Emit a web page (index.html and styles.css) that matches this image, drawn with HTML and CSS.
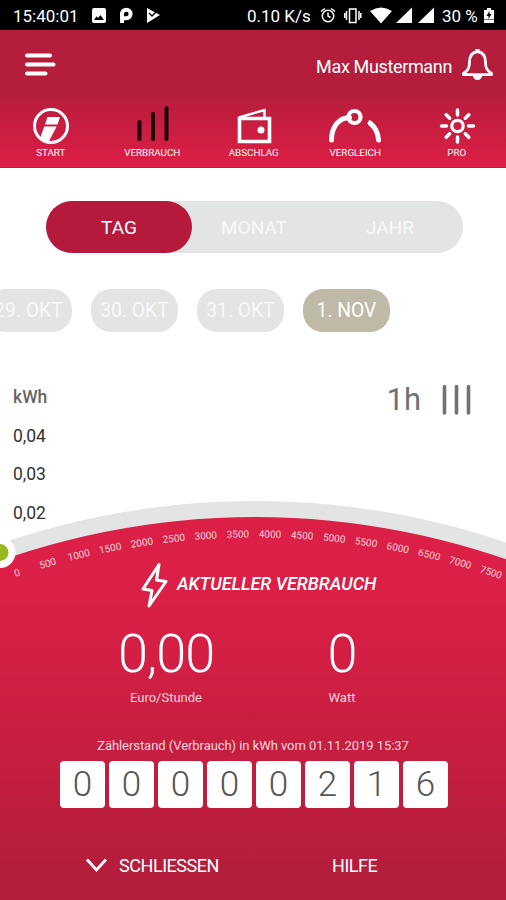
FILE: index.html
```html
<!DOCTYPE html>
<html lang="de">
<head>
  <meta charset="UTF-8">
  <meta name="viewport" content="width=device-width, initial-scale=1.0">
  <title>Verbrauch</title>
  <link rel="stylesheet" href="styles.css">
</head>
<body>
  <div class="app">
    <div class="status">
      <span class="clock">15:40:01</span>
      <svg class="status-left" width="72" height="18" viewBox="90 7 72 18">
        <path fill="#fff" fill-rule="evenodd" d="M94 8h10q2 0 2 2v11q0 2-2 2H94q-2 0-2-2V10q0-2 2-2zM94 20h10l-3.500-5-2.500 3-1.500-1.800z"/>
        <path fill="none" stroke="#fff" stroke-width="3.900" d="M122 23v-9a4.300 4.300 0 1 1 4.300 4.300h-3"/>
        <path fill="#fff" d="M147 8l13 7-13 8z"/>
        <path fill="none" stroke="#000" stroke-width="1.300" d="M149 13l3 3 7-7"/>
      </svg>
      <span class="speed">0.10 K/s</span>
      <svg class="status-right" width="118" height="18" viewBox="318 7 118 18">
        <g fill="none" stroke="#fff" stroke-width="1.500">
          <circle cx="328" cy="16" r="5.700"/>
          <path d="M328 12.500V16l2.500 1.500M321 11.500l4-3M335 11.500l-4-3"/>
          <path d="M349.500 9h6.500v13.500h-6.500zM346.500 11v9M359 11v9M344.700 13v5M360.800 13v5"/>
        </g>
        <path fill="#fff" d="M370 11q11-7 22 0l-11 12.500zM396 23l16-15.500V23zM418 23l16-15.500V23z"/>
      </svg>
      <span class="charge">30 %</span>
      <svg class="battery" width="12" height="18" viewBox="483 7 12 18">
        <path fill="#fff" d="M487 8h4v2h3v13h-10V10h3z"/>
        <path fill="#000" d="M489.500 11l-3 5h2v3l3-5h-2z"/>
        <path stroke="#777" d="M484 19.500h10"/>
      </svg>
    </div>

    <header class="header">
      <div class="topbar">
        <svg class="menu" width="32" height="26" viewBox="24 52 32 26">
          <path d="M27 55.500h23M27 64.500h26.500M27 73.500h18.500"/>
        </svg>
        <div class="user">
          <span class="user-name">Max Mustermann</span>
          <svg width="32" height="34" viewBox="461 48 32 34">
            <path fill="none" stroke="#fff" stroke-width="2.800" stroke-linejoin="round" d="M477.500 51.500c-6 1-8 5-8 10.500 0 6-1.500 8.500-6 11.500v1.200h28v-1.200c-4.500-3-6-5.500-6-11.500 0-5.500-2-9.500-8-10.500z"/>
            <path fill="#fff" d="M472.500 75h10q-1 5-5 5t-5-5zM475.500 52v-3h4v3z"/>
          </svg>
        </div>
      </div>
      <nav class="nav">
        <a class="nav-item">
          <svg width="60" height="42" viewBox="21 105 60 42">
            <circle cx="51" cy="126" r="16.500" fill="none" stroke="#fff" stroke-width="3"/>
            <path fill="#fff" d="M47.500 117H60l-2.500 7.500H45zM44.200 126.500h12.500L48.500 142l-8.500-3.500z"/>
          </svg>
          <span>START</span>
        </a>
        <a class="nav-item">
          <svg width="60" height="42" viewBox="122 105 60 42">
            <path stroke="#1d0509" stroke-width="4" stroke-linecap="round" d="M139.500 122v17M153 114v25M166.500 108v31"/>
          </svg>
          <span>VERBRAUCH</span>
        </a>
        <a class="nav-item">
          <svg width="60" height="42" viewBox="224 105 60 42">
            <path fill="none" stroke="#fff" stroke-width="3.600" d="M239.500 118.500h30v23h-30z"/>
            <path fill="none" stroke="#fff" stroke-width="2.400" d="M239 117.500l25.500-7.500v8"/>
            <circle cx="261" cy="130" r="3.500" fill="#fff"/>
          </svg>
          <span>ABSCHLAG</span>
        </a>
        <a class="nav-item">
          <svg width="60" height="42" viewBox="326 105 60 42">
            <g fill="none" stroke="#fff" stroke-width="5" stroke-linecap="round">
              <path d="M332.500 140c0-13 7-22 18-22.500M371 123q8 6.500 8.500 17"/>
              <circle cx="355.500" cy="117" r="6" stroke-width="4.200"/>
            </g>
          </svg>
          <span>VERGLEICH</span>
        </a>
        <a class="nav-item">
          <svg width="60" height="42" viewBox="427 105 60 42">
            <g fill="none" stroke="#fff" stroke-width="3.500" stroke-linecap="round">
              <circle cx="457.500" cy="126" r="5.700" stroke-width="3.200"/>
              <path d="M457.500 110v5M457.500 137v5M441.500 126h5M468.500 126h5M446.200 114.700l3.500 3.500M465.300 133.800l3.500 3.500M446.200 137.300l3.500-3.500M465.300 118.200l3.500-3.500"/>
            </g>
          </svg>
          <span>PRO</span>
        </a>
      </nav>
    </header>

    <div class="tabs">
      <div class="tab active">TAG</div>
      <div class="tab">MONAT</div>
      <div class="tab">JAHR</div>
    </div>

    <div class="days">
      <div class="day">29. OKT</div>
      <div class="day">30. OKT</div>
      <div class="day">31. OKT</div>
      <div class="day active">1. NOV</div>
    </div>

    <div class="chart">
      <ul class="axis">
        <li class="unit">kWh</li>
        <li>0,04</li>
        <li>0,03</li>
        <li>0,02</li>
      </ul>
      <div class="interval">
        <span>1h</span>
        <svg width="30" height="32" viewBox="442 384 30 32">
          <path stroke="#707274" stroke-width="3.600" stroke-linecap="round" d="M444.500 386.500v26.500M456.500 386.500v26.500M468.500 386.500v26.500"/>
        </svg>
      </div>
    </div>

    <section class="panel">
      <svg class="gauge" width="506" height="400" viewBox="0 500 506 400">
        <defs>
          <linearGradient id="red" gradientUnits="userSpaceOnUse" x1="0" y1="600" x2="0" y2="870">
            <stop offset="0" stop-color="#db1f46"/>
            <stop offset="1" stop-color="#b51d3c"/>
          </linearGradient>
        </defs>
        <circle cx="255" cy="1283" r="782" fill="#e2e5e4"/>
        <circle cx="255" cy="1283" r="766" fill="url(#red)"/>
        <circle cx="0" cy="552.500" r="15.500" fill="#fff"/>
        <circle cx="0" cy="552.500" r="8.500" fill="#98b91c"/>
        <!-- scale, 2.46deg per 500 W -->
        <g class="scale">
          <text x="254" y="537.500" transform="rotate(-18.450 255 1283)">0</text>
          <text x="254" y="537.500" transform="rotate(-15.990 255 1283)">500</text>
          <text x="254" y="537.500" transform="rotate(-13.530 255 1283)">1000</text>
          <text x="254" y="537.500" transform="rotate(-11.070 255 1283)">1500</text>
          <text x="254" y="537.500" transform="rotate(-8.610 255 1283)">2000</text>
          <text x="254" y="537.500" transform="rotate(-6.150 255 1283)">2500</text>
          <text x="254" y="537.500" transform="rotate(-3.690 255 1283)">3000</text>
          <text x="254" y="537.500" transform="rotate(-1.230 255 1283)">3500</text>
          <text x="254" y="537.500" transform="rotate(1.230 255 1283)">4000</text>
          <text x="254" y="537.500" transform="rotate(3.690 255 1283)">4500</text>
          <text x="254" y="537.500" transform="rotate(6.150 255 1283)">5000</text>
          <text x="254" y="537.500" transform="rotate(8.610 255 1283)">5500</text>
          <text x="254" y="537.500" transform="rotate(11.070 255 1283)">6000</text>
          <text x="254" y="537.500" transform="rotate(13.530 255 1283)">6500</text>
          <text x="254" y="537.500" transform="rotate(15.990 255 1283)">7000</text>
          <text x="254" y="537.500" transform="rotate(18.450 255 1283)">7500</text>
        </g>
      </svg>

      <div class="content">
        <h1 class="title">
          <svg width="28" height="46" viewBox="140 562 28 46">
            <path fill="none" stroke="#fff" stroke-width="3" stroke-linejoin="round" d="M159 564.500l-16 24.500 9 1.500-3 15.500 17-24.500-9.500-1.500z"/>
          </svg>
          <span>AKTUELLER VERBRAUCH</span>
        </h1>
        <div class="values">
          <div class="value">
            <strong>0,00</strong>
            <span>Euro/Stunde</span>
          </div>
          <div class="value">
            <strong>0</strong>
            <span>Watt</span>
          </div>
        </div>
        <p class="reading">Zählerstand (Verbrauch) in kWh vom 01.11.2019 15:37</p>
        <div class="counter">
          <span>0</span>
          <span>0</span>
          <span>0</span>
          <span>0</span>
          <span>0</span>
          <span>2</span>
          <span>1</span>
          <span>6</span>
        </div>
        <div class="actions">
          <a class="close">
            <svg width="22" height="16" viewBox="85 855 22 16">
              <path fill="none" stroke="#fff" stroke-width="2.800" d="M87 857.500l9.500 10.500 9.500-10.500"/>
            </svg>
            <span>SCHLIESSEN</span>
          </a>
          <a class="help">HILFE</a>
        </div>
      </div>
    </section>
  </div>
</body>
</html>
```
FILE: styles.css
```css
* {
  box-sizing: border-box;
}

body {
  margin: 0;
  background: #fff;
  font-family: Roboto, "Liberation Sans", sans-serif;
}

svg {
  display: block;
  flex: none;
}

.app {
  display: flex;
  flex-direction: column;
  width: 506px;
  height: 900px;
  overflow: hidden;
}

/* status bar */

.status {
  display: flex;
  align-items: center;
  height: 30px;
  padding: 2px 11px 0 13px;
  background: #000;
  color: #fff;
  font-size: 17px;
  white-space: nowrap;
}

.clock {
  width: 77px;
}

.speed {
  margin-left: auto;
  width: 71px;
}

.charge {
  width: 40px;
  margin: 0 1px 0 6px;
}

/* header */

.header {
  height: 138px;
  background: linear-gradient(#b51d3c 0, #b51d3c 45%, #de1e46 100%);
  border-bottom: 1px solid #b81d3c;
  color: #fff;
}

.topbar {
  display: flex;
  justify-content: space-between;
  align-items: center;
  height: 70px;
  padding: 0 13px 0 24px;
}

.menu path {
  stroke: #fff;
  stroke-width: 4px;
  stroke-linecap: round;
}

.user {
  display: flex;
  align-items: center;
  gap: 9px;
  font-size: 18px;
}

.user-name {
  margin-top: 2px;
  letter-spacing: -.35px;
}

.nav {
  display: grid;
  grid-template-columns: repeat(5, 101.5px);
  padding-top: 5px;
}

.nav-item {
  display: flex;
  flex-direction: column;
  align-items: center;
  font-size: 9.8px;
  line-height: 12px;
}

/* period */

.tabs {
  display: flex;
  width: 417px;
  height: 52px;
  margin: 33px 0 0 46px;
  padding-right: 5px;
  border-radius: 26px;
  background: #e2e5e4;
}

.tab {
  flex: 1;
  text-align: center;
  line-height: 53px;
  font-size: 19px;
  color: #f8f9f9;
}

.tab.active {
  flex: none;
  width: 146px;
  margin-right: -6px;
  border-radius: 26px;
  background: #b5193c;
  color: #fff;
}

.days {
  display: flex;
  gap: 19px;
  margin: 36px 0 0 -15px;
}

.day {
  width: 87px;
  height: 43px;
  border-radius: 20px;
  background: #e2e5e4;
  color: #f8f9f9;
  font-size: 19.3px;
  line-height: 43px;
  text-align: center;
  white-space: nowrap;
}

.day.active {
  background: #bfbaa8;
  color: #fff;
}

/* chart */

.chart {
  position: relative;
  z-index: 1;
  display: flex;
  justify-content: space-between;
  align-items: flex-start;
  height: 168px;
  padding: 46px 34px 0 13px;
}

.axis {
  margin: 0;
  padding: 0;
  list-style: none;
  color: #333;
  font-size: 17.5px;
  line-height: 38.7px;
}

.axis .unit {
  color: #666;
  font-weight: 500;
}

.interval {
  display: flex;
  align-items: center;
  gap: 21px;
  margin-top: 6px;
  color: #707274;
  font-size: 31px;
  line-height: 32px;
}

/* current usage */

.panel {
  position: relative;
  flex: none;
  height: 400px;
  color: #fff;
}

.gauge {
  position: absolute;
  top: 0;
  left: 0;
}

.scale text {
  fill: #fbd3da;
  font-size: 10px;
  text-anchor: middle;
}

.content {
  position: relative;
  display: flex;
  flex-direction: column;
  padding-top: 62px;
}

.title {
  display: flex;
  align-items: center;
  gap: 9px;
  height: 46px;
  margin: 0 0 0 140px;
  font-size: 18px;
  font-weight: 500;
  font-style: italic;
  white-space: nowrap;
}

.title span {
  margin-top: -3px;
}

.values {
  display: grid;
  grid-template-columns: 176px 176px;
  margin: 14px 0 0 78px;
}

.value {
  display: flex;
  flex-direction: column;
  align-items: center;
}

.value strong {
  font-size: 54px;
  font-weight: 300;
  line-height: 64px;
  letter-spacing: -1px;
}

.value span {
  margin-top: 3px;
  font-size: 13px;
  line-height: 18px;
  color: #f9d5dc;
}

.reading {
  margin: 30px 0 0;
  font-size: 13px;
  line-height: 18px;
  letter-spacing: -.06px;
  text-align: center;
  color: #f9d5dc;
}

.counter {
  display: flex;
  gap: 4px;
  margin: 6px 0 0 60px;
}

.counter span {
  width: 45px;
  height: 47px;
  border-radius: 4px;
  background: #fff;
  color: #555;
  font-size: 35px;
  font-weight: 300;
  line-height: 48px;
  text-align: center;
}

.actions {
  display: flex;
  align-items: center;
  height: 24px;
  margin: 45px 0 0 85px;
  font-size: 18px;
  letter-spacing: -.45px;
}

.close {
  display: flex;
  align-items: center;
  gap: 12px;
  width: 247px;
}
```
